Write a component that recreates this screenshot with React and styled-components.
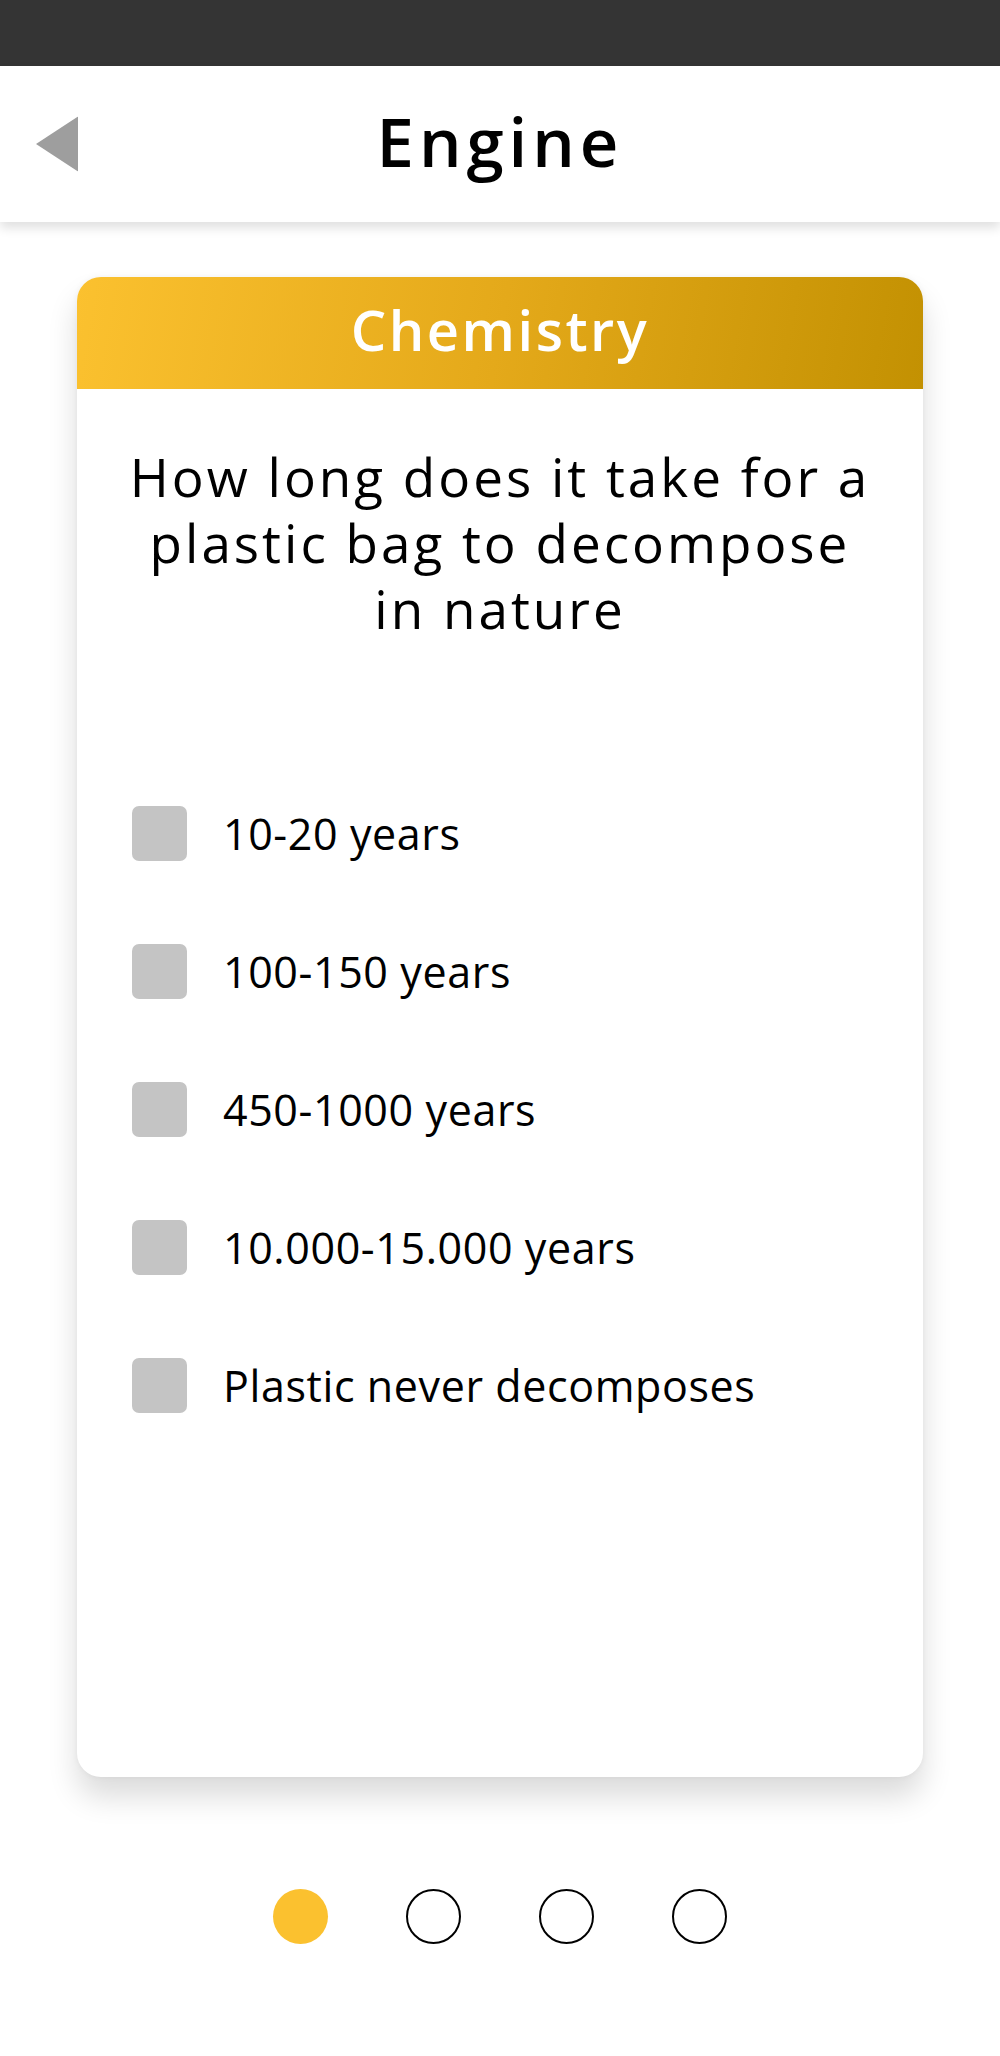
import React, { useState } from "react";
import styled, { createGlobalStyle } from "styled-components";

const GlobalStyle = createGlobalStyle`
  html, body {
    margin: 0;
    padding: 0;
    background: #fff;
  }
  body {
    font-family: "Open Sans", "Noto Sans", sans-serif;
    color: #000;
  }
`;

const options = [
  "10-20 years",
  "100-150 years",
  "450-1000 years",
  "10.000-15.000 years",
  "Plastic never decomposes",
];

const App = () => {
  const [page] = useState(0);

  return (
    <Screen>
      <GlobalStyle />
      <StatusBar />
      <Header>
        <BackButton aria-label="Back">
          <svg width="42" height="55" viewBox="0 0 42 55">
            <polygon points="42,0 42,55 0,27.5" fill="#9e9e9e" />
          </svg>
        </BackButton>
        <Title>Engine</Title>
      </Header>

      <Main>
        <Card>
          <CardHeader>Chemistry</CardHeader>
          <Question>
            How long does it take for a plastic bag to decompose in nature
          </Question>
          <OptionList>
            {options.map((label) => (
              <Option key={label}>
                <Box />
                <OptionText>{label}</OptionText>
              </Option>
            ))}
          </OptionList>
        </Card>

        <Dots>
          {[0, 1, 2, 3].map((i) => (
            <Dot key={i} $active={i === page} />
          ))}
        </Dots>
      </Main>
    </Screen>
  );
};

const Screen = styled.div`
  width: 1000px;
  min-height: 2056px;
  background: #fff;
`;

const StatusBar = styled.div`
  height: 66px;
  background: #343434;
`;

const Header = styled.header`
  position: relative;
  height: 156px;
  display: flex;
  align-items: center;
  justify-content: center;
  background: #fff;
  box-shadow: 0 6px 10px rgba(0, 0, 0, 0.12);
`;

const BackButton = styled.button`
  position: absolute;
  left: 36px;
  top: 50%;
  transform: translateY(-50%);
  display: flex;
  padding: 0;
  border: none;
  background: none;
  cursor: pointer;
`;

const Title = styled.h1`
  margin: 0 0 6px;
  font-size: 67px;
  font-weight: 600;
  letter-spacing: 5px;
  color: #000;
`;

const Main = styled.main`
  display: flex;
  flex-direction: column;
  align-items: center;
  padding-top: 55px;
`;

const Card = styled.section`
  width: 846px;
  height: 1500px;
  background: #fff;
  border-radius: 24px;
  overflow: hidden;
  box-shadow: 0 20px 30px rgba(0, 0, 0, 0.14), 0 0 6px rgba(0, 0, 0, 0.05);
  display: flex;
  flex-direction: column;
`;

const CardHeader = styled.div`
  height: 112px;
  box-sizing: border-box;
  padding-bottom: 8px;
  display: flex;
  align-items: center;
  justify-content: center;
  background: linear-gradient(100deg, #fbc12f 0%, #e4a91a 50%, #c39102 100%);
  color: #fff;
  font-size: 56px;
  font-weight: 600;
  letter-spacing: 2.5px;
`;

const Question = styled.p`
  margin: 0;
  padding: 55px 40px 0;
  text-align: center;
  font-size: 53px;
  line-height: 66px;
  letter-spacing: 3px;
`;

const OptionList = styled.ul`
  list-style: none;
  margin: 0;
  padding: 164px 0 0 55px;
  display: flex;
  flex-direction: column;
  gap: 83px;
`;

const Option = styled.li`
  display: flex;
  align-items: center;
  gap: 36px;
  height: 55px;
`;

const Box = styled.span`
  width: 55px;
  height: 55px;
  border-radius: 7px;
  background: #c4c4c4;
  flex-shrink: 0;
`;

const OptionText = styled.span`
  font-size: 43px;
  line-height: 55px;
  letter-spacing: 0.6px;
  color: #000;
`;

const Dots = styled.div`
  display: flex;
  gap: 78px;
  margin-top: 112px;
`;

const Dot = styled.span`
  width: 55px;
  height: 55px;
  border-radius: 50%;
  box-sizing: border-box;
  background: ${({ $active }) => ($active ? "#fbc12f" : "transparent")};
  border: ${({ $active }) => ($active ? "none" : "2px solid #000")};
`;

export default App;
